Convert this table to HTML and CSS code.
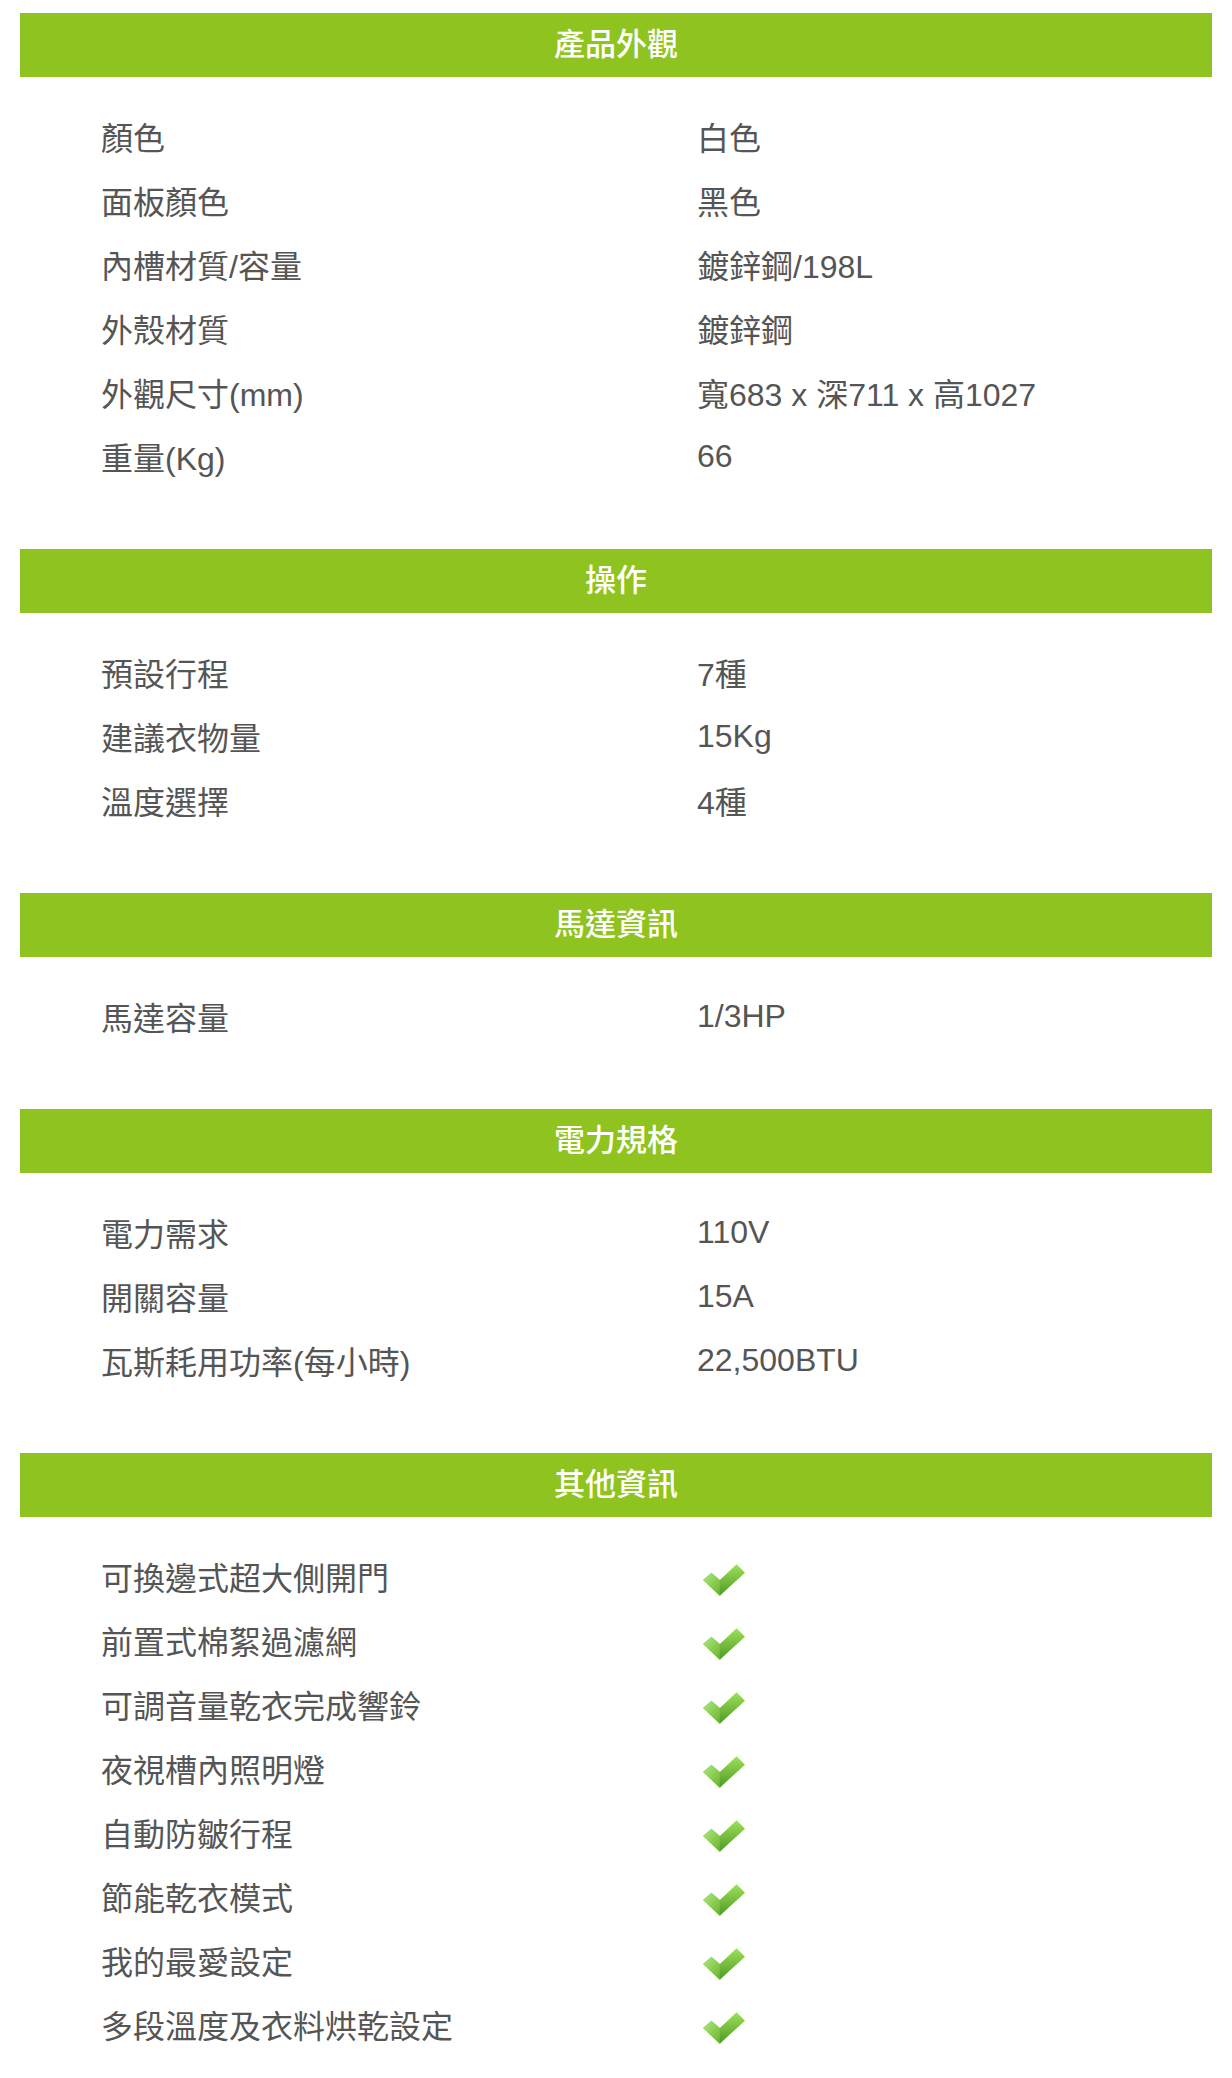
FILE: index.html
```html
<!DOCTYPE html>
<html lang="zh-Hant">
<head>
<meta charset="utf-8">
<link rel="stylesheet" href="styles.css">
</head>
<body>
<svg width="0" height="0" class="defs">
  <defs>
    <linearGradient id="ckg" x1="0" y1="0" x2="0" y2="1">
      <stop offset="0" stop-color="#9ee05a"/>
      <stop offset="1" stop-color="#4f9a22"/>
    </linearGradient>
    <linearGradient id="ckh" x1="0" y1="0" x2="1" y2="1">
      <stop offset="0" stop-color="#b8ee85"/>
      <stop offset="1" stop-color="#6cb834"/>
    </linearGradient>
    <symbol id="check" viewBox="0 0 42 30">
      <polygon points="1,15 9,8 17,15 33,0 41,8 17,30" fill="url(#ckg)"/>
      <polygon points="1,15 9,8 17,15 17,30" fill="url(#ckh)" opacity="0.85"/>
    </symbol>
  </defs>
</svg>
<div class="page">
  <section class="spec">
    <h2 class="spec-head">產品外觀</h2>
    <div class="spec-body">
      <div class="row"><span class="lbl">顏色</span><span class="val">白色</span></div>
      <div class="row"><span class="lbl">面板顏色</span><span class="val">黑色</span></div>
      <div class="row"><span class="lbl">內槽材質/容量</span><span class="val">鍍鋅鋼/198L</span></div>
      <div class="row"><span class="lbl">外殼材質</span><span class="val">鍍鋅鋼</span></div>
      <div class="row"><span class="lbl">外觀尺寸(mm)</span><span class="val">寬683 x 深711 x 高1027</span></div>
      <div class="row"><span class="lbl">重量(Kg)</span><span class="val">66</span></div>
    </div>
  </section>
  <section class="spec">
    <h2 class="spec-head">操作</h2>
    <div class="spec-body">
      <div class="row"><span class="lbl">預設行程</span><span class="val">7種</span></div>
      <div class="row"><span class="lbl">建議衣物量</span><span class="val">15Kg</span></div>
      <div class="row"><span class="lbl">溫度選擇</span><span class="val">4種</span></div>
    </div>
  </section>
  <section class="spec">
    <h2 class="spec-head">馬達資訊</h2>
    <div class="spec-body">
      <div class="row"><span class="lbl">馬達容量</span><span class="val">1/3HP</span></div>
    </div>
  </section>
  <section class="spec">
    <h2 class="spec-head">電力規格</h2>
    <div class="spec-body">
      <div class="row"><span class="lbl">電力需求</span><span class="val">110V</span></div>
      <div class="row"><span class="lbl">開關容量</span><span class="val">15A</span></div>
      <div class="row"><span class="lbl">瓦斯耗用功率(每小時)</span><span class="val">22,500BTU</span></div>
    </div>
  </section>
  <section class="spec">
    <h2 class="spec-head">其他資訊</h2>
    <div class="spec-body">
      <div class="row"><span class="lbl">可換邊式超大側開門</span><span class="val"><svg class="ck"><use href="#check"/></svg></span></div>
      <div class="row"><span class="lbl">前置式棉絮過濾網</span><span class="val"><svg class="ck"><use href="#check"/></svg></span></div>
      <div class="row"><span class="lbl">可調音量乾衣完成響鈴</span><span class="val"><svg class="ck"><use href="#check"/></svg></span></div>
      <div class="row"><span class="lbl">夜視槽內照明燈</span><span class="val"><svg class="ck"><use href="#check"/></svg></span></div>
      <div class="row"><span class="lbl">自動防皺行程</span><span class="val"><svg class="ck"><use href="#check"/></svg></span></div>
      <div class="row"><span class="lbl">節能乾衣模式</span><span class="val"><svg class="ck"><use href="#check"/></svg></span></div>
      <div class="row"><span class="lbl">我的最愛設定</span><span class="val"><svg class="ck"><use href="#check"/></svg></span></div>
      <div class="row"><span class="lbl">多段溫度及衣料烘乾設定</span><span class="val"><svg class="ck"><use href="#check"/></svg></span></div>
    </div>
  </section>
</div>
</body>
</html>
```

FILE: styles.css
```css
html, body {
  margin: 0;
  padding: 0;
  background: #ffffff;
}
body {
  font-family: "Liberation Sans", "Noto Sans CJK TC", sans-serif;
  color: #555555;
}
.defs {
  position: absolute;
  width: 0;
  height: 0;
  overflow: hidden;
}
.page {
  padding: 13px 20px 0 20px;
}
.spec {
  padding-bottom: 61px;
}
.spec-head {
  margin: 0;
  height: 64px;
  background: #8fc31f;
  color: #ffffff;
  font-size: 31px;
  font-weight: 500;
  line-height: 64px;
  text-align: center;
}
.spec-body {
  padding: 27px 0 0 81px;
}
.row {
  display: grid;
  grid-template-columns: 596px 1fr;
  height: 64px;
  align-items: center;
  font-size: 32px;
}
.val {
  display: flex;
  align-items: center;
}
.ck {
  width: 44px;
  height: 32px;
  margin-left: 5px;
  margin-top: 8px;
}
```
